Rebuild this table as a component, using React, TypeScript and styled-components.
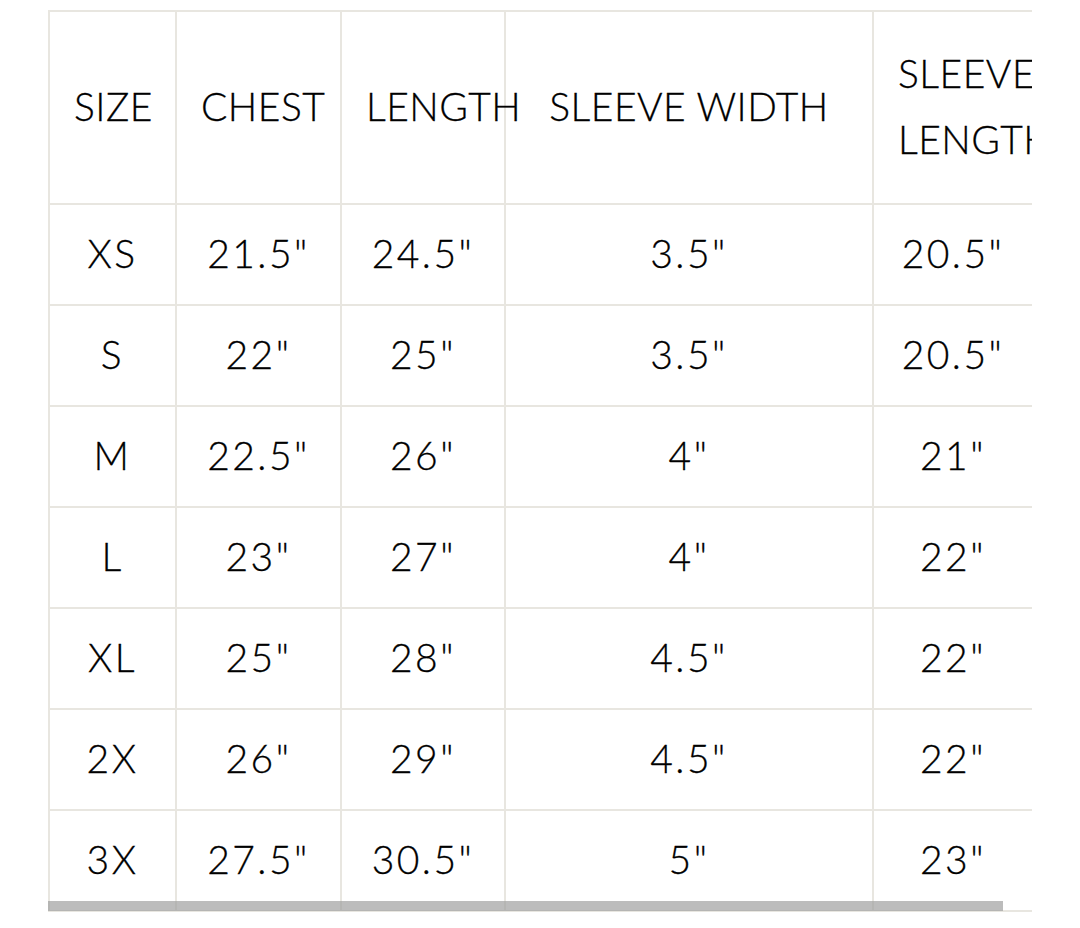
import React from "react";
import styled, { createGlobalStyle } from "styled-components";

const GlobalStyle = createGlobalStyle`
  html, body {
    margin: 0;
    padding: 0;
    background: #ffffff;
  }
  body {
    font-family: "Lato", "Open Sans", sans-serif;
    color: #000000;
  }
`;

const Page = styled.div`
  padding: 10px 0 0 48px;
`;

const Scroller = styled.div`
  position: relative;
  width: 984px;
  overflow: hidden;
`;

const Table = styled.table`
  border-collapse: separate;
  border-spacing: 0;
  table-layout: fixed;
  width: 986px;
  border-top: 2px solid #e8e6e0;
  border-left: 2px solid #e8e6e0;
`;

const HeadCell = styled.th<{ $w: number; $wrap?: boolean }>`
  box-sizing: border-box;
  width: ${(p) => p.$w}px;
  height: 193px;
  padding: 0 24px 4px;
  border-right: 2px solid #e8e6e0;
  border-bottom: 2px solid #e8e6e0;
  font-weight: 300;
  font-size: 39px;
  line-height: 66px;
  letter-spacing: 0.5px;
  text-align: center;
  white-space: ${(p) => (p.$wrap ? "normal" : "nowrap")};
  overflow: visible;
  color: #000;
  -webkit-text-stroke: 0.3px #000;
`;

const Cell = styled.td`
  box-sizing: border-box;
  height: 101px;
  padding: 0 20px 4px;
  border-right: 2px solid #e8e6e0;
  border-bottom: 2px solid #e8e6e0;
  font-weight: 300;
  font-size: 39px;
  letter-spacing: 2.5px;
  text-align: center;
  white-space: nowrap;
  color: #000;
  -webkit-text-stroke: 0.3px #000;
`;

const Thumb = styled.div`
  position: absolute;
  left: 0;
  bottom: 1px;
  width: 955px;
  height: 10px;
  background: rgba(160, 160, 160, 0.7);
`;

const columns = [
  { label: "SIZE", w: 127 },
  { label: "CHEST", w: 165 },
  { label: "LENGTH", w: 164 },
  { label: "SLEEVE WIDTH", w: 368 },
  { label: "SLEEVE LENGTH", w: 160, wrap: true },
];

const rows = [
  ["XS", '21.5"', '24.5"', '3.5"', '20.5"'],
  ["S", '22"', '25"', '3.5"', '20.5"'],
  ["M", '22.5"', '26"', '4"', '21"'],
  ["L", '23"', '27"', '4"', '22"'],
  ["XL", '25"', '28"', '4.5"', '22"'],
  ["2X", '26"', '29"', '4.5"', '22"'],
  ["3X", '27.5"', '30.5"', '5"', '23"'],
];

export default function App() {
  return (
    <>
      <GlobalStyle />
      <Page>
        <Scroller>
          <Table>
            <thead>
              <tr>
                {columns.map((c) => (
                  <HeadCell key={c.label} $w={c.w} $wrap={c.wrap}>
                    {c.label}
                  </HeadCell>
                ))}
              </tr>
            </thead>
            <tbody>
              {rows.map((r) => (
                <tr key={r[0]}>
                  {r.map((v, i) => (
                    <Cell key={i}>{v}</Cell>
                  ))}
                </tr>
              ))}
            </tbody>
          </Table>
          <Thumb />
        </Scroller>
      </Page>
    </>
  );
}
